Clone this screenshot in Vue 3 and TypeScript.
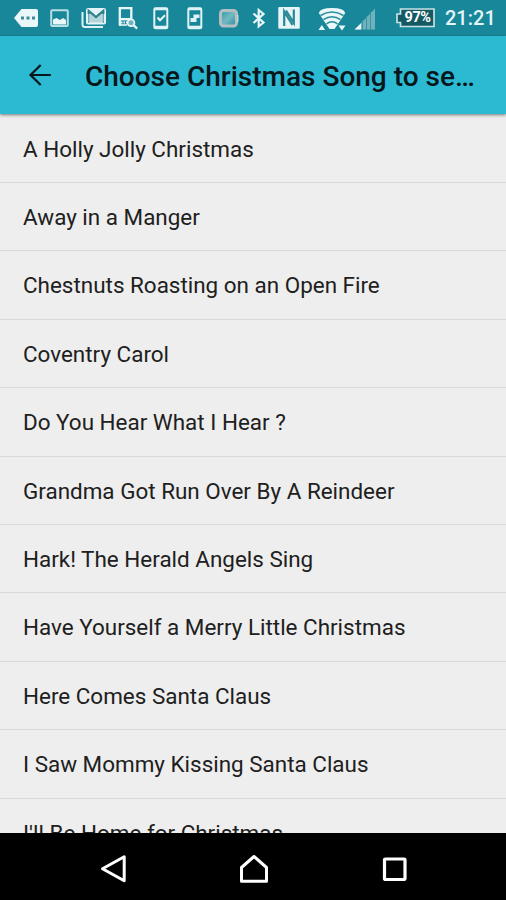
<script setup lang="ts">
const title: string = 'Choose Christmas Song to se…'

const songs: string[] = [
  'A Holly Jolly Christmas',
  'Away in a Manger',
  'Chestnuts Roasting on an Open Fire',
  'Coventry Carol',
  'Do You Hear What I Hear ?',
  'Grandma Got Run Over By A Reindeer',
  'Hark! The Herald Angels Sing',
  'Have Yourself a Merry Little Christmas',
  'Here Comes Santa Claus',
  'I Saw Mommy Kissing Santa Claus',
  "I'll Be Home for Christmas",
]
</script>

<template>
  <div class="screen">
    <div class="status-bar">
      <svg width="24" height="36" viewBox="0 0 24 36">
        <path d="M7.500 9H22q2 0 2 2v14q0 2-2 2H7.500L0 18z" fill="#e9f7f9" />
        <path d="M7 16.500h3v3H7zM12.500 16.500h3v3h-3zM18 16.500h3v3h-3z" fill="#3d8b98" />
      </svg>
      <svg width="19" height="36" viewBox="0 0 19 36">
        <rect x="1.200" y="10.200" width="16.600" height="15.800" rx="1" fill="none" stroke="#b9dfe5" stroke-width="2" />
        <path d="M3 19.500l3.500-1.500 3.500 2 3-2 3 2v4.500H3z" fill="#e9f7f9" />
      </svg>
      <svg width="26" height="36" viewBox="0 0 26 36">
        <path d="M1.500 12v12.500q0 2.500 2.500 2.500h18" fill="none" stroke="#dff2f5" stroke-width="2" />
        <rect x="5" y="8" width="20" height="16.500" rx="2" fill="#e4f4f6" />
        <path d="M8.500 22.500V13l6.500 5 6.500-5v9.500z" fill="#b4d5db" />
        <path d="M7.700 14V10.800L15 17l7.300-6.200V14" fill="none" stroke="#2c808d" stroke-width="2.200" />
        <path d="M7.700 14v9M22.300 14v9" stroke="#6eabb5" stroke-width="1.400" />
      </svg>
      <svg width="20" height="36" viewBox="0 0 20 36">
        <path d="M1.800 25.500V8.200h11.500v11" fill="none" stroke="#e9f7f9" stroke-width="2.300" />
        <path d="M1 19.200h12" fill="none" stroke="#e9f7f9" stroke-width="2.500" />
        <path d="M3 22.500h6" stroke="#e9f7f9" stroke-width="2" stroke-dasharray="1.500 1" />
        <path d="M1 25h8" stroke="#e9f7f9" stroke-width="1.600" />
        <circle cx="13" cy="22.700" r="3.400" fill="#6fb3bd" stroke="#e9f7f9" stroke-width="1.800" />
        <path d="M15.500 25.200l3.700 3.500" stroke="#dff2f5" stroke-width="2.500" />
      </svg>
      <svg width="16" height="36" viewBox="0 0 16 36">
        <rect x="1.300" y="8.200" width="13" height="20" rx="1.500" fill="none" stroke="#dff2f5" stroke-width="2" />
        <path d="M1 9h13.500M1 27h13.500" stroke="#dff2f5" stroke-width="2.600" />
        <path d="M4.500 17.500l2.500 2.700 5-5" fill="none" stroke="#effbfc" stroke-width="2" />
      </svg>
      <svg width="16" height="36" viewBox="0 0 16 36">
        <rect x="1.300" y="8.200" width="13" height="20" rx="1.500" fill="none" stroke="#dff2f5" stroke-width="2" />
        <path d="M1 9h13.500M1 27h13.500" stroke="#dff2f5" stroke-width="2.600" />
        <path d="M6.500 14.500h6V18h-3v4H3.500v-4h3z" fill="#dff2f5" />
      </svg>
      <svg width="20" height="36" viewBox="0 0 20 36">
        <defs>
          <linearGradient id="glass" x1="0" y1="0" x2="1" y2="1">
            <stop offset="0" stop-color="#2e98a7" />
            <stop offset=".5" stop-color="#74b9c3" />
            <stop offset="1" stop-color="#248b9a" />
          </linearGradient>
        </defs>
        <rect x="1.500" y="10.500" width="16" height="15.500" rx="3" fill="url(#glass)" stroke="#b4bfc1" stroke-width="3" />
        <path d="M18.700 15v7" stroke="#c5d6d9" stroke-width="1.500" />
      </svg>
      <svg width="14" height="36" viewBox="0 0 14 36">
        <path d="M1.500 13.500l10 9-4.800 4V10l4.800 4-10 9" fill="none" stroke="#e9f7f9" stroke-width="2.200" />
      </svg>
      <svg width="22" height="36" viewBox="0 0 22 36">
        <rect x=".3" y="7" width="21.500" height="21.800" rx="1" fill="#e6f5f7" />
        <path d="M6.200 26V11.500L14.500 25" fill="none" stroke="#2a8895" stroke-width="2.200" />
        <path d="M15.800 9.500V23L8 10.500" fill="none" stroke="#2a8895" stroke-width="2.200" />
      </svg>
      <svg width="28" height="36" viewBox="0 0 28 36">
        <path d="M.8 13Q2 8 14 8t13.200 5L22 21l-5.500 8h-5L6 21z" fill="#e9f7f9" />
        <path d="M2.500 15.500q11.500-7 23 0M5.500 19.600q8.500-5.500 17 0M8.500 23.800q5.500-4 11 0" fill="none" stroke="#258c9a" stroke-width="1.500" />
        <path d="M.5 30l3.300-5 3.300 5zM20.500 25.500h7l-3.500 5z" fill="#e9f7f9" />
      </svg>
      <svg width="22" height="36" viewBox="0 0 22 36">
        <path d="M1 29.500L21 8.500v21z" fill="#6db3bf" />
        <path d="M.5 29.500l6.500-6.300v6.300z" fill="#e9f7f9" />
        <path d="M8.500 20v10M12.500 16v14M16.500 12v18" stroke="#40929f" stroke-width="1" />
      </svg>
      <div class="battery">
        <svg width="39" height="36" viewBox="0 0 39 36">
          <path d="M4.500 9H38v17.500H4.500v-4H1V14h3.500z" fill="#155963" stroke="#c7e1e5" stroke-width="1.700" />
        </svg>
        <span class="battery-level">97%</span>
      </div>
      <span class="clock">21:21</span>
    </div>

    <header class="app-bar">
      <svg class="back" width="24" height="24" viewBox="0 0 24 24">
        <path d="M12.700 2L2.500 12l10.200 10M2.800 12h20" fill="none" stroke="#06161a" stroke-width="2.200" />
      </svg>
      <h1 class="title">{{ title }}</h1>
    </header>

    <main class="list-area">
      <ul class="songs">
        <li v-for="song in songs" :key="song" class="song">{{ song }}</li>
      </ul>
    </main>

    <nav class="nav-bar">
      <svg width="28" height="30" viewBox="0 0 28 30">
        <path d="M24.200 2.800v24L2.500 14.800z" fill="none" stroke="#fff" stroke-width="3" stroke-linejoin="round" />
      </svg>
      <svg class="home" width="30" height="30" viewBox="0 0 30 30">
        <path d="M15 2.500L27.500 13.500V27.200h-25V13.500z" fill="none" stroke="#fff" stroke-width="3" stroke-linejoin="round" />
      </svg>
      <svg width="26" height="30" viewBox="0 0 26 30">
        <rect x="2.500" y="5" width="20.500" height="20.500" rx=".8" fill="none" stroke="#fff" stroke-width="3.200" />
      </svg>
    </nav>
  </div>
</template>

<style>
body {
  background: #eee;
}
</style>

<style scoped>
.screen {
  display: flex;
  flex-direction: column;
  width: 506px;
  height: 900px;
  overflow: hidden;
  background: #eee;
  font-family: Roboto, "Liberation Sans", sans-serif;
}

svg {
  display: block;
  flex: none;
}

.status-bar {
  display: grid;
  flex: none;
  grid-template-columns: 36px 31px 37px 35px 34px 32px 33px 26px 40px 36px 42px 49px auto;
  height: 36px;
  padding-left: 14px;
  background: #188799;
}

.battery {
  position: relative;
}

.battery-level {
  position: absolute;
  top: 9px;
  left: 6px;
  width: 31px;
  color: #fff;
  font-size: 14.5px;
  font-weight: 700;
  line-height: 18px;
  letter-spacing: -0.5px;
  text-align: center;
}

.clock {
  color: #e3f5f7;
  font-size: 20px;
  font-weight: 500;
  line-height: 37px;
}

.app-bar {
  position: relative;
  z-index: 1;
  display: flex;
  flex: none;
  align-items: center;
  height: 78px;
  padding-left: 28px;
  background: #2cbad3;
  box-shadow: 0 1px 3px rgba(0, 0, 0, 0.5);
}

.title {
  margin: 3px 0 0 33px;
  color: #06161a;
  font-size: 28px;
  font-weight: 500;
  line-height: 34px;
  white-space: nowrap;
}

.list-area {
  flex: 1;
  min-height: 0;
  overflow: hidden;
}

.songs {
  margin: 0;
  padding: 0.6px 0 0;
  list-style: none;
}

.song {
  box-sizing: border-box;
  height: 68.4px;
  padding: 0 23px;
  border-bottom: 1px solid #d8d8d8;
  color: #202020;
  font-size: 22.44px;
  line-height: 68px;
  white-space: nowrap;
}

.nav-bar {
  display: flex;
  flex: none;
  align-items: center;
  justify-content: space-between;
  height: 67px;
  box-sizing: border-box;
  padding: 4px 98px 0 100px;
  background: #000;
}

.home {
  margin-right: 3px;
}
</style>
